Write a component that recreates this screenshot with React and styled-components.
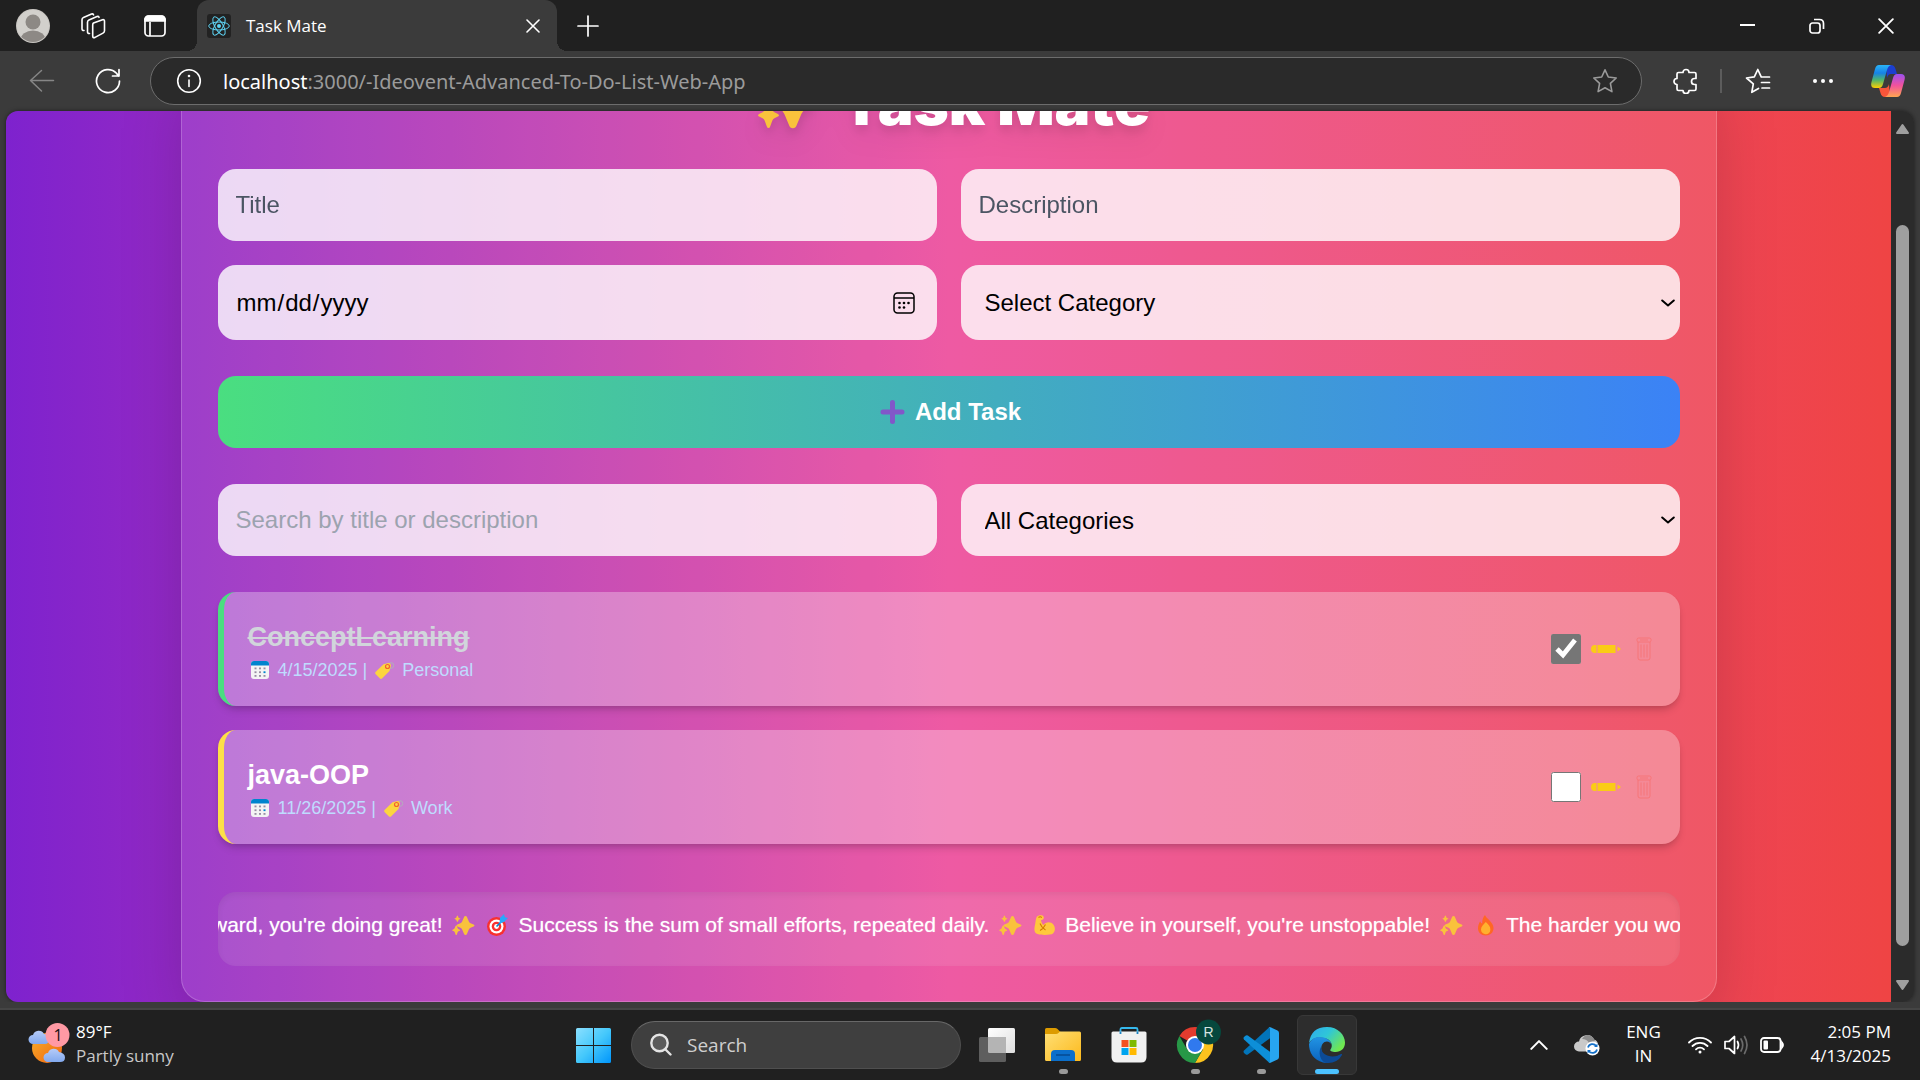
import React, { useState } from "react";
import styled, { createGlobalStyle } from "styled-components";

const ui = '"Open Sans", "Noto Sans", sans-serif';
const sans = '"Liberation Sans", Arial, sans-serif';

const GlobalStyle = createGlobalStyle`
  *, *::before, *::after { box-sizing: border-box; }
  body { margin: 0; background: #3b3b3b; font-family: ${ui}; color: #fff; }
  button, input, select { font: inherit; color: inherit; margin: 0; }
  button { border: 0; padding: 0; background: none; cursor: pointer; }
  h1, h2, p, ul { margin: 0; padding: 0; }
  ul { list-style: none; }
  svg { display: block; flex: none; }
`;

/* ---------- window frame ---------- */

const Desktop = styled.div`
  height: 100vh;
  display: grid;
  grid-template-rows: 51px 60px minmax(0, 1fr) 78px;
  grid-template-columns: minmax(0, 1fr);
  background: #3b3b3b;
`;

const TitleBar = styled.header`
  display: flex;
  align-items: center;
  background: #202020;
`;

const IconButton = styled.button`
  display: flex;
  align-items: center;
  justify-content: center;
  width: ${(p) => p.$w || 62}px;
  height: 48px;
  flex: none;
  color: ${(p) => (p.$dim ? "#868686" : "#fff")};
`;

const TitleTools = styled.div`
  display: flex;
  align-items: center;
  width: 197px;
  padding-left: 2px;
`;

const Tab = styled.div`
  position: relative;
  display: flex;
  align-items: center;
  align-self: stretch;
  width: 360px;
  padding: 0 2px 0 10px;
  background: #3b3b3b;
  border-radius: 12px 12px 0 0;
  font-size: 17px;

  &::before, &::after {
    content: "";
    position: absolute;
    bottom: 0;
    width: 10px;
    height: 10px;
  }
  &::before { left: -10px; background: radial-gradient(circle at 0 0, transparent 10px, #3b3b3b 10px); }
  &::after { right: -10px; background: radial-gradient(circle at 100% 0, transparent 10px, #3b3b3b 10px); }
`;

const TabTitle = styled.span`
  flex: 1;
  margin-left: 15px;
`;

const WindowControls = styled.div`
  display: flex;
  margin-left: auto;
`;

const Toolbar = styled.nav`
  display: flex;
  align-items: center;
  padding: 0 0 0 9px;
`;

const AddressBar = styled.div`
  display: flex;
  align-items: center;
  flex: 1;
  height: 48px;
  margin: 0 16px 0 9px;
  padding: 0 6px 0 8px;
  background: #2a2a2a;
  border: 1px solid #6c6c6c;
  border-radius: 24px;
`;

const Address = styled.div`
  flex: 1;
  padding-left: 4px;
  font-family: "Noto Sans", sans-serif;
  font-size: 20px;
  color: #9b9b9b;
  b { font-weight: 400; color: #fff; }
`;

const Divider = styled.span`
  width: 2px;
  height: 24px;
  margin: 0 4px 0 6px;
  background: #5c5c5c;
`;

const Stage = styled.div`
  display: flex;
  min-height: 0;
  margin: 0 6px;
  border-radius: 12px;
  overflow: hidden;
  box-shadow: 0 0 4px rgba(0, 0, 0, 0.5);
`;

const ScrollBar = styled.div`
  display: flex;
  flex-direction: column;
  align-items: center;
  width: 23px;
  padding: 12px 0 11px;
  background: #2b2b2b;
  color: #9f9f9f;
`;

const ScrollTrack = styled.div`
  flex: 1;
  width: 13px;
  padding: 90px 0 33px;
  display: flex;
`;

const ScrollThumb = styled.div`
  flex: 1;
  border-radius: 7px;
  background: #9f9f9f;
`;

/* ---------- page ---------- */

const Page = styled.main`
  flex: 1;
  min-width: 0;
  display: flex;
  flex-direction: column;
  justify-content: flex-end;
  align-items: center;
  overflow: hidden;
  font-family: ${sans};
  background: linear-gradient(to right, #7e22ce, #ec4899, #ef4444);
`;

const Card = styled.section`
  width: 100%;
  max-width: 1536px;
  padding: 36px 36px 35px;
  background: rgba(255, 255, 255, 0.1);
  border: 1px solid rgba(255, 255, 255, 0.2);
  border-radius: 24px;
  box-shadow: 0 38px 75px -18px rgba(0, 0, 0, 0.25);
`;

const Heading = styled.h1`
  display: flex;
  justify-content: center;
  align-items: center;
  gap: 18px;
  height: 60px;
  margin-bottom: 36px;
  font-family: Inter, ${sans};
  font-size: 60px;
  line-height: 60px;
  font-weight: 900;
  filter: drop-shadow(0 15px 12px rgba(0, 0, 0, 0.05)) drop-shadow(0 6px 5px rgba(0, 0, 0, 0.1));
`;

const FieldGrid = styled.div`
  display: grid;
  grid-template-columns: repeat(2, minmax(0, 1fr));
  gap: 24px;
  margin-bottom: 36px;
`;

const Field = styled.label`
  position: relative;
  display: flex;
  height: ${(p) => (p.$tall ? 75 : 72)}px;
`;

const control = `
  width: 100%;
  height: 100%;
  border: 0;
  border-radius: 18px;
  outline: 0;
  background: rgba(255, 255, 255, 0.8);
  color: #000;
  font-family: ${sans};
  font-size: 24px;
`;

const TextInput = styled.input`
  ${control}
  padding: 0 18px;
  &::placeholder { color: ${(p) => (p.$soft ? "#9ca3af" : "#4b5563")}; opacity: 1; }
  &::-webkit-calendar-picker-indicator { opacity: 0; }
`;

const Select = styled.select`
  ${control}
  appearance: none;
  padding: 0 24px;
`;

const FieldIcon = styled.span`
  position: absolute;
  top: 0;
  bottom: 0;
  right: ${(p) => p.$right}px;
  display: flex;
  align-items: center;
  color: #000;
  pointer-events: none;
`;

const AddButton = styled.button`
  display: flex;
  align-items: center;
  justify-content: center;
  gap: 6px;
  width: 100%;
  height: 72px;
  margin-bottom: 36px;
  border-radius: 18px;
  background: linear-gradient(to right, #4ade80, #3b82f6);
  font-size: 24px;
  font-weight: 700;
`;

const TaskList = styled.ul`
  display: flex;
  flex-direction: column;
  gap: 24px;
`;

const TaskItem = styled.li`
  display: flex;
  align-items: center;
  justify-content: space-between;
  padding: 24px;
  border-left: 6px solid ${(p) => (p.$done ? "#4ade80" : "#fde047")};
  border-radius: 18px;
  background: rgba(255, 255, 255, 0.3);
  box-shadow: 0 6px 9px -2px rgba(0, 0, 0, 0.15), 0 3px 6px -3px rgba(0, 0, 0, 0.15);
`;

const TaskTitle = styled.h2`
  font-size: 27px;
  line-height: 42px;
  color: ${(p) => (p.$done ? "#d1d5db" : "#fff")};
  text-decoration: ${(p) => (p.$done ? "line-through" : "none")};
`;

const TaskMeta = styled.p`
  display: flex;
  align-items: center;
  gap: 5px;
  font-size: 18px;
  line-height: 24px;
  color: #bfdbfe;
`;

const Actions = styled.div`
  display: flex;
  align-items: center;
  gap: 10px;
`;

const Check = styled.input`
  width: 30px;
  height: 30px;
  accent-color: #767676;
`;

const ActionButton = styled.button`
  display: flex;
  justify-content: center;
  align-items: center;
  width: ${(p) => p.$w}px;
  height: 36px;
  color: ${(p) => p.$color};
`;

const Ticker = styled.div`
  height: 74px;
  margin-top: 48px;
  padding: 18px 0 0;
  border-radius: 18px;
  overflow: hidden;
  background: rgba(255, 255, 255, 0.1);
  box-shadow: inset 0 3px 6px rgba(0, 0, 0, 0.06);
`;

const TickerTrack = styled.div`
  display: flex;
  align-items: center;
  gap: 6px;
  width: max-content;
  font-size: 21px;
  line-height: 30px;
  white-space: nowrap;
  text-shadow: 0 0 1px rgba(255, 255, 255, 0.6);
  transform: translateX(-30px);
`;

/* ---------- task bar ---------- */

const BottomEdge = styled.footer`
  display: grid;
  grid-template-rows: 6px 2px 70px;
  background: #3b3b3b;
`;

const EdgeLine = styled.span`
  grid-row: 2;
  background: #454545;
`;

const TaskBar = styled.div`
  grid-row: 3;
  display: grid;
  grid-template-columns: minmax(0, 1fr) auto minmax(0, 1fr);
  align-items: center;
  background: #202020;
`;

const Weather = styled.button`
  display: flex;
  align-items: center;
  gap: 6px;
  justify-self: start;
  padding-left: 28px;
  text-align: left;
`;

const TwoLines = styled.span`
  display: flex;
  flex-direction: column;
  padding-bottom: 2px;
  font-size: 17px;
  line-height: 24px;
  color: #fff;
  text-align: ${(p) => p.$align || "left"};
  small { font-size: 17px; color: #c8c8c8; }
`;

const Apps = styled.div`
  display: flex;
  align-items: center;
  gap: 6px;
`;

const AppTile = styled.button`
  position: relative;
  display: flex;
  align-items: center;
  justify-content: center;
  width: 60px;
  height: 60px;
  border-radius: 6px;
  border: 1px solid ${(p) => (p.$active ? "#383838" : "transparent")};
  background: ${(p) => (p.$active ? "#2d2d2d" : "transparent")};

  &::after {
    content: "";
    display: ${(p) => (p.$running || p.$active ? "block" : "none")};
    position: absolute;
    bottom: 0;
    width: ${(p) => (p.$active ? 24 : 9)}px;
    height: 5px;
    border-radius: 3px;
    background: ${(p) => (p.$active ? "#4cc2ff" : "#9a9a9a")};
  }
`;

const SearchBox = styled.label`
  display: flex;
  align-items: center;
  gap: 15px;
  width: 330px;
  height: 48px;
  padding: 0 18px;
  margin-left: 2px;
  border-radius: 24px;
  border: 1px solid #4f4f4f;
  border-top-color: #686868;
  background: #3f3f3f;
`;

const SearchInput = styled.input`
  flex: 1;
  min-width: 0;
  border: 0;
  outline: 0;
  padding: 0;
  background: none;
  font-size: 19px;
  &::placeholder { color: #cfcfcf; opacity: 1; }
`;

const Tray = styled.div`
  display: flex;
  align-items: center;
  justify-self: end;
  padding-right: 29px;
`;

const Quick = styled.button`
  display: flex;
  align-items: center;
  gap: 12px;
  margin: 0 26px 0 13px;
`;

/* ---------- drawings ---------- */

const Star4 = ({ x, y, r, ry = r }) => (
  <path
    d={`M${x} ${y - ry}q${r * 0.12} 0 ${r * 0.16} ${ry * 0.12}l${r * 0.2} ${ry * 0.44}q${r * 0.06} ${ry * 0.14} ${r * 0.2} ${ry * 0.2}l${r * 0.34} ${ry * 0.14}q${r * 0.1} ${ry * 0.05} ${r * 0.1} ${ry * 0.1}t${-r * 0.1} ${ry * 0.1}l${-r * 0.34} ${ry * 0.14}q${-r * 0.14} ${ry * 0.06} ${-r * 0.2} ${ry * 0.2}l${-r * 0.2} ${ry * 0.44}q${-r * 0.04} ${ry * 0.12} ${-r * 0.16} ${ry * 0.12}t${-r * 0.16} ${-ry * 0.12}l${-r * 0.2} ${-ry * 0.44}q${-r * 0.06} ${-ry * 0.14} ${-r * 0.2} ${-ry * 0.2}l${-r * 0.34} ${-ry * 0.14}q${-r * 0.1} ${-ry * 0.05} ${-r * 0.1} ${-ry * 0.1}t${r * 0.1} ${-ry * 0.1}l${r * 0.34} ${-ry * 0.14}q${r * 0.14} ${-ry * 0.06} ${r * 0.2} ${-ry * 0.2}l${r * 0.2} ${-ry * 0.44}q${r * 0.04} ${-ry * 0.12} ${r * 0.16} ${-ry * 0.12}z`}
  />
);

const Sparkles = ({ size = 29 }) => (
  <svg width={size} height={size} viewBox="0 0 29 29" fill="#f9c23c">
    <Star4 x={17.5} y={14.5} r={9} ry={9.6} />
    <Star4 x={8.2} y={19.2} r={4} ry={4.8} />
    <Star4 x={9.4} y={7.8} r={3} ry={3.2} />
  </svg>
);

const Target = () => (
  <svg width="29" height="29" viewBox="0 0 29 29">
    <circle cx="13.5" cy="15.5" r="9.5" fill="#f8312f" />
    <circle cx="13.5" cy="15.5" r="7" fill="#fff" />
    <circle cx="13.5" cy="15.5" r="4.8" fill="#f8312f" />
    <circle cx="13.5" cy="15.5" r="2.4" fill="#fff" />
    <path d="M13.5 15.5L20 9" stroke="#0084ce" strokeWidth="1.6" />
    <path d="M16.500 12.500l.5-5.500 4-4 .8 3.200 3.200.8-4 4z" fill="#26a9fc" />
  </svg>
);

const Muscle = () => (
  <svg width="29" height="29" viewBox="0 0 29 29">
    <path d="M7 5.500c2-1.500 5.500-2 6.500 0s-.5 3.500-2.500 3.500c.6 2.500.8 3.500 2.500 5 2-2.800 5-3.600 7.800-2.200 4 2 4.800 8.200 1.700 10.700-2.500 1.800-12 2-16.200.3-3.400-1.600-2.300-6.800-1.600-9.800.5-3 .5-5.500 1.800-7.500z" fill="#ffc83d" />
    <path d="M8.500 6.500q2-1.600 3.200.2M10 12.500c1 3 2.500 4.500 5.500 6.500M15.500 13.500c-1.500 3-3.500 5-5.500 6" stroke="#d67d00" strokeWidth="1.1" fill="none" />
  </svg>
);

const Flame = () => (
  <svg width="29" height="29" viewBox="0 0 29 29">
    <path d="M14 4c1 3.500 8.500 7 8.500 13 0 4.600-3.400 7.500-7.800 7.500S7 21.600 7 17.300c0-3 1-5 2.200-7 .5 1.400 1 2 2 2.300C11 9.500 12 6 14 4z" fill="#ff6723" />
    <path d="M14.800 11c3 2.800 4.600 4.700 4.600 7.400 0 3-2 4.800-4.700 4.800s-4.700-1.800-4.700-4.600c0-3 2.200-4.400 4.800-7.600z" fill="#ffb02e" />
  </svg>
);

const CalendarEmoji = () => (
  <svg width="25" height="24" viewBox="0 0 25 24">
    <rect x="3" y="3" width="18" height="18" rx="3" fill="#f4f4f4" />
    <path d="M3 7.500V6a3 3 0 0 1 3-3h12a3 3 0 0 1 3 3v1.500z" fill="#0084ce" />
    <g fill="#998ea4">
      {[6.5, 11, 15.5].map((x) => [9.5, 13.3, 17].map((y) => <rect key={x + "-" + y} x={x} y={y} width="2" height="1.800" fill={x === 15.5 && y === 13.3 ? "#0084ce" : "#998ea4"} />))}
    </g>
  </svg>
);

const TagEmoji = () => (
  <svg width="25" height="24" viewBox="0 0 25 24">
    <circle cx="19" cy="7.500" r="2.800" fill="none" stroke="#b4acbc" strokeWidth="1" />
    <path d="M11.500 6.200L16.500 5q2.200 0 2.500 2.400L17.500 13l-7.500 7.500q-1 .8-2 0L3.500 16q-.8-1 0-2z" fill="#fcd53f" />
    <circle cx="15.500" cy="8.500" r="2" fill="none" stroke="#f3622f" strokeWidth="1.200" />
  </svg>
);

const PlusEmoji = () => (
  <svg width="33" height="28" viewBox="0 0 33 28" stroke="#8257c9" strokeWidth="5" strokeLinecap="round">
    <path d="M16.500 4.500v19M7 14h19" />
  </svg>
);

const DateIcon = () => (
  <svg width="22" height="22" viewBox="0 0 22 22" fill="none" stroke="currentColor" strokeWidth="1.500">
    <rect x="1" y="1" width="20" height="20" rx="3.500" />
    <path d="M1 6h20" />
    <g fill="currentColor" stroke="none">
      <circle cx="6.500" cy="11" r="1.300" /><circle cx="11" cy="11" r="1.300" /><circle cx="15.500" cy="11" r="1.300" />
      <circle cx="6.500" cy="15.500" r="1.300" /><circle cx="11" cy="15.500" r="1.300" />
    </g>
  </svg>
);

const Chevron = ({ up, size = 14, w = 2 }) => (
  <svg width={size} height={size} viewBox="0 0 14 14" fill="none" stroke="currentColor" strokeWidth={w} strokeLinecap="round" strokeLinejoin="round">
    <path d={up ? "M1 10L7 4l6 6" : "M1.200 4.500L7 9.500l5.800-5"} />
  </svg>
);

const Pencil = () => (
  <svg width="30" height="8" viewBox="0 0 30 8" fill="currentColor">
    <path d="M4 0h1.500v8H4a4 4 0 0 1 0-8zM6.500 0h18v8h-18zM26.500 1.500L30 4l-3.500 2.500z" />
  </svg>
);

const Trash = () => (
  <svg width="16" height="24" viewBox="0 0 16 24" fill="none" stroke="currentColor" strokeWidth=".8">
    <rect x="1" y="1" width="14" height="4" rx="1.500" />
    <path d="M2 5v16q0 2 2 2h8q2 0 2-2V5M5 7.500v13M8 7.500v13M11 7.500v13M4 3h8" />
  </svg>
);

const Avatar = () => (
  <svg width="34" height="34" viewBox="0 0 34 34">
    <clipPath id="avatar"><circle cx="17" cy="17" r="16" /></clipPath>
    <circle cx="17" cy="17" r="17" fill="#c9c6c2" />
    <g clipPath="url(#avatar)">
      <rect width="34" height="34" fill="#d2d0cc" />
      <circle cx="17" cy="13" r="7.500" fill="#8d8985" />
      <ellipse cx="17" cy="31" rx="12.500" ry="9.500" fill="#8d8985" />
    </g>
  </svg>
);

const Workspaces = () => (
  <svg width="26" height="26" viewBox="0 0 26 26" fill="none" stroke="currentColor" strokeWidth="1.600" strokeLinejoin="round" strokeLinecap="round">
    <path d="M13.500 10l9-3.300q2-.5 2 1.500v9.500q0 1.600-1.500 2.400l-8 4.300q-2.300.9-2.300-1.500V12q0-1.400.8-2z" />
    <path d="M9.500 20.500q-2 .2-2-1.800V9.200q0-1.600 1.500-2.300L17 3.500q1.500-.4 2 .8" />
    <path d="M4 17.500q-2 .2-2-1.800V6.700q0-1.600 1.500-2.300L11.500 1q1.500-.4 2 .8" />
  </svg>
);

const TabActions = () => (
  <svg width="24" height="24" viewBox="0 0 24 24" fill="none" stroke="currentColor" strokeWidth="1.700">
    <rect x="2" y="2" width="20" height="20" rx="3.500" />
    <path d="M2 5.500A3.500 3.500 0 0 1 5.500 2h13A3.500 3.500 0 0 1 22 5.500V7H2z" fill="currentColor" />
    <path d="M7 8v14" />
  </svg>
);

const ReactLogo = () => (
  <svg width="24" height="24" viewBox="0 0 24 24">
    <rect width="24" height="24" rx="3" fill="#222" />
    <g fill="none" stroke="#5ed3f3" strokeWidth="1">
      {[0, 60, 120].map((a) => <ellipse key={a} cx="12" cy="12" rx="10.300" ry="4" transform={`rotate(${a} 12 12)`} />)}
    </g>
    <circle cx="12" cy="12" r="2" fill="#5ed3f3" />
  </svg>
);

const Cross = ({ size = 14 }) => (
  <svg width={size} height={size} viewBox="0 0 14 14" stroke="currentColor" strokeWidth="1.600" strokeLinecap="round">
    <path d="M1 1l12 12M13 1L1 13" />
  </svg>
);

const Plus = () => (
  <svg width="22" height="22" viewBox="0 0 22 22" stroke="currentColor" strokeWidth="1.700" strokeLinecap="round"><path d="M11 1v20M1 11h20" /></svg>
);

const Minimize = () => (
  <svg width="16" height="16" viewBox="0 0 16 16" fill="currentColor"><rect y="6" width="15" height="2" /></svg>
);

const Restore = () => (
  <svg width="16" height="16" viewBox="0 0 16 16" fill="none" stroke="currentColor" strokeWidth="1.700">
    <rect x="1" y="5" width="10" height="10" rx="2.500" />
    <path d="M5 1.500h5.500q4 0 4 4V11" />
  </svg>
);

const Back = () => (
  <svg width="26" height="26" viewBox="0 0 26 26" fill="none" stroke="currentColor" strokeWidth="1.500" strokeLinecap="round" strokeLinejoin="round">
    <path d="M24.500 12.500H1.500M12.500 2.500L1.500 12.500l11 10.500" />
  </svg>
);

const Reload = () => (
  <svg width="26" height="26" viewBox="0 0 26 26" fill="none" stroke="currentColor" strokeWidth="1.700" strokeLinecap="round" strokeLinejoin="round">
    <path d="M24.500 13A11.500 11.500 0 1 1 21.500 5.300L23.500 8M24 1.500V8h-6.500" />
  </svg>
);

const Info = () => (
  <svg width="26" height="26" viewBox="0 0 26 26" fill="none" stroke="currentColor" strokeWidth="1.600" strokeLinecap="round">
    <circle cx="13" cy="13" r="11.300" /><path d="M13 12v6.500" /><circle cx="13" cy="8" r=".5" fill="currentColor" />
  </svg>
);

const StarIcon = () => (
  <svg width="26" height="26" viewBox="0 0 26 26" fill="none" stroke="#9a9a9a" strokeWidth="1.600" strokeLinejoin="round">
    <path d="M13 1.800l3.300 7.200 7.900 1-5.800 5.400 1.500 8.200-6.900-3.900-6.900 3.900 1.500-8.200L1.800 10l7.900-1z" />
  </svg>
);

const Puzzle = () => (
  <svg width="26" height="26" viewBox="0 0 26 26" fill="none" stroke="currentColor" strokeWidth="1.700" strokeLinejoin="round">
    <path d="M5.500 4.500H10a3 3 0 0 1 6 0h5.500q1.500 0 1.500 1.500v4.500h-1.500a3 3 0 0 0 0 6H23V21q0 1.500-1.500 1.500H16a3 3 0 0 1-6 0H5.500Q4 22.500 4 21v-4.500a3 3 0 0 1 0-6V6q0-1.500 1.500-1.500z" />
  </svg>
);

const Favorites = () => (
  <svg width="26" height="26" viewBox="0 0 26 26" fill="none" stroke="currentColor" strokeWidth="1.700" strokeLinejoin="round" strokeLinecap="round">
    <path d="M17 9h7.500M16.500 14.500h8M17 20h7.500" />
    <path d="M13.500 20.500l-6.700 3.800 1.500-8.400L1.500 10l7.800-1.200L12.800 1.500l3.400 7.300" />
  </svg>
);

const Dots = () => (
  <svg width="22" height="6" viewBox="0 0 22 6" fill="currentColor"><circle cx="3" cy="3" r="2" /><circle cx="11" cy="3" r="2" /><circle cx="19" cy="3" r="2" /></svg>
);

const Copilot = () => (
  <svg width="34" height="32" viewBox="0 0 34 32">
    <defs>
      <linearGradient id="cpA" x1="0" y1="0" x2="0" y2="1"><stop offset="0" stopColor="#2ab4f8" /><stop offset=".35" stopColor="#1682e6" /><stop offset=".65" stopColor="#4fb56c" /><stop offset="1" stopColor="#ffd000" /></linearGradient>
      <linearGradient id="cpB" x1="0" y1="0" x2="0" y2="1"><stop offset="0" stopColor="#9b50f0" /><stop offset=".5" stopColor="#f2529c" /><stop offset="1" stopColor="#ffa650" /></linearGradient>
    </defs>
    <path d="M15 0h5q3.500 0 4.500 4l1.500 5h-6q-3 0-4 4z" fill="#1c3fd0" />
    <path d="M19 32h-5q-3.500 0-4.500-4L8 23h6q3 0 4-4z" fill="#f8553a" />
    <path d="M8 0h12q-3 1-4 5l-4 14q-1 4-4 4H4q-5 0-3.500-6L4 4q1-4 4-4z" fill="url(#cpA)" />
    <path d="M26 32H14q3-1 4-5l4-14q1-4 4-4h4q5 0 3.500 6L30 28q-1 4-4 4z" fill="url(#cpB)" />
  </svg>
);

const Arrow = ({ down }) => (
  <svg width="15" height="12" viewBox="0 0 15 12" fill="currentColor" stroke="currentColor" strokeWidth="2" strokeLinejoin="round">
    <path d={down ? "M2 2h11L7.500 10z" : "M2 10h11L7.500 2z"} />
  </svg>
);

const WeatherIcon = () => (
  <svg width="42" height="44" viewBox="0 0 42 44">
    <defs>
      <linearGradient id="sun" x1="0" y1="0" x2="1" y2="1"><stop offset="0" stopColor="#f6b02c" /><stop offset="1" stopColor="#f2640f" /></linearGradient>
      <linearGradient id="cloud" x1="0" y1="0" x2="0" y2="1"><stop offset="0" stopColor="#b5cbf8" /><stop offset="1" stopColor="#82a9ee" /></linearGradient>
    </defs>
    <circle cx="19" cy="25" r="15" fill="url(#sun)" />
    <path d="M5 21a4.500 4.500 0 0 1 0-9 6 6 0 0 1 11-1q5 0 5 5t-4 5z" fill="url(#cloud)" />
    <path d="M20 39a4.500 4.500 0 0 1 0-9 6 6 0 0 1 11-1q6 1 6 5.500T32 39z" fill="url(#cloud)" />
    <circle cx="29.500" cy="12" r="12" fill="#ff99a4" />
    <text x="30" y="18" fontSize="16" textAnchor="middle" fill="#111" fontFamily="Open Sans">1</text>
  </svg>
);

const WindowsLogo = () => (
  <svg width="35" height="35" viewBox="0 0 35 35">
    <defs><linearGradient id="win" x1="0" y1="0" x2="35" y2="35" gradientUnits="userSpaceOnUse"><stop offset="0" stopColor="#8be0ff" /><stop offset=".5" stopColor="#45c8fb" /><stop offset="1" stopColor="#0095fb" /></linearGradient></defs>
    <g fill="url(#win)"><path d="M1.500 0H17v17H0V1.500Q0 0 1.500 0zM18 0h15.500Q35 0 35 1.500V17H18zM0 18h17v17H1.500Q0 35 0 33.500zM18 18h17v15.500q0 1.500-1.500 1.500H18z" /></g>
  </svg>
);

const Magnifier = () => (
  <svg width="22" height="24" viewBox="0 0 22 24" fill="#5b5b5b" stroke="#e4e4e4" strokeWidth="2.400" strokeLinecap="round">
    <circle cx="9.500" cy="10" r="8.200" /><path d="M15.500 16.500l5 5" />
  </svg>
);

const TaskView = () => (
  <svg width="36" height="34" viewBox="0 0 36 34">
    <defs><linearGradient id="tv" x1="0" y1="0" x2="1" y2="1"><stop offset="0" stopColor="#fff" /><stop offset="1" stopColor="#dedede" /></linearGradient></defs>
    <rect x="9" width="27" height="25" rx="1.500" fill="url(#tv)" />
    <rect y="9" width="27" height="25" rx="1.500" fill="#5e5e5e" />
    <path d="M9 9h18v16H10.500Q9 25 9 23.500z" fill="#b4b4b4" />
  </svg>
);

const Folder = () => (
  <svg width="36" height="34" viewBox="0 0 36 34">
    <defs><linearGradient id="fold" x1="0" y1="0" x2="1" y2="1"><stop offset="0" stopColor="#ffdf75" /><stop offset="1" stopColor="#fcb91c" /></linearGradient></defs>
    <path d="M0 1.500Q0 0 1.500 0H10q1.500 0 2.500 1l3 3v6H0z" fill="#dd9b00" />
    <path d="M0 6h11q1.500 0 2.500-1l1.500-1.500h19.500Q36 3.500 36 5v26.500q0 1.500-1.500 1.500h-33Q0 33 0 31.500z" fill="url(#fold)" />
    <path d="M6 33v-7q0-4 4-4h16q4 0 4 4v7z" fill="#0b6fcb" />
    <path d="M11 27h14" stroke="#064a92" strokeWidth="1.500" />
  </svg>
);

const Store = () => (
  <svg width="36" height="36" viewBox="0 0 36 36">
    <path d="M9.500 8V2.500q0-1.500 1.500-1.500h14q1.500 0 1.500 1.500V8" fill="none" stroke="#35b8ec" strokeWidth="1.800" />
    <path d="M.5 6Q.5 4.500 2 4.500h32q1.500 0 1.500 1.500v24q0 5.500-5.500 5.500H6Q.5 35.500.5 30z" fill="#f1f1f1" />
    <path d="M9.500 7V4.500M26.500 7V4.500" stroke="#1a83c4" strokeWidth="1.800" />
    <path d="M10.500 13h7v7h-7z" fill="#f25022" /><path d="M18.500 13h7v7h-7z" fill="#7fba00" />
    <path d="M10.500 21h7v7h-7z" fill="#00a4ef" /><path d="M18.500 21h7v7h-7z" fill="#ffb900" />
  </svg>
);

const Chrome = () => (
  <svg width="52" height="52" viewBox="0 0 52 52">
    <path d="M26 26L10.400 17A18 18 0 0 1 41.600 17H26z" fill="#e33b2e" />
    <path d="M26 17h15.600A18 18 0 0 1 26 44l7.800-13.500z" fill="#fcc31e" />
    <path d="M26 44A18 18 0 0 1 10.400 17l7.800 13.500L33.800 30.500z" fill="#279847" />
    <circle cx="26" cy="26" r="9" fill="#fff" /><circle cx="26" cy="26" r="7" fill="#3079ee" />
    <circle cx="39.500" cy="13" r="12.500" fill="#06483d" />
    <text x="39.500" y="18" fontSize="14" textAnchor="middle" fill="#d5e4e0" fontFamily="Liberation Sans">R</text>
  </svg>
);

const VSCode = () => (
  <svg width="36" height="36" viewBox="0 0 36 36">
    <path d="M26 0.500L1 23.500q-1 1.200 0 2.400l1.800 1.600q1 .7 2 0L34 6z" fill="#0274b9" />
    <path d="M26 35.500L1 12.500q-1-1.200 0-2.400l1.800-1.600q1-.7 2 0L34 30z" fill="#0d8fd8" />
    <path d="M25.500.5q1-.7 2-.2l7 3.300q1.500.8 1.500 2.400v24q0 1.600-1.500 2.400l-7 3.300q-1.200.5-2-.3 1.500.5 1.500-1.600V2q0-2-1.500-1.500z" fill="#27a5f0" />
  </svg>
);

const Edge = () => (
  <svg width="36" height="36" viewBox="0 0 36 36">
    <defs>
      <linearGradient id="eA" x1="0" y1="0" x2="1" y2=".6"><stop offset="0" stopColor="#2fa9ee" /><stop offset=".5" stopColor="#2fc6d8" /><stop offset="1" stopColor="#70e850" /></linearGradient>
      <linearGradient id="eB" x1="0" y1="0" x2="0" y2="1"><stop offset="0" stopColor="#2294e4" /><stop offset="1" stopColor="#0a62bd" /></linearGradient>
    </defs>
    <path d="M0 16Q2 0 18 0c11 0 18 8 18 15.500 0 6-4 9.500-9.500 9.500-3.500 0-6-1-5-2.500 3-4 1-10-6.500-11.500Q5 9 0 16z" fill="url(#eA)" />
    <path d="M0 17q3-7 10-7c7 0 12 3.500 12.500 8-.7-3-4-4.500-7-3-5 3-4 12 1 16.500q2.500 2.500 6 3Q18 36.500 14 35.500 0 31 0 17z" fill="url(#eB)" />
    <path d="M12 20c0 6 5.500 9.500 11.500 9.500 4 0 6.500-1.500 8.500-2.500q1.500-.5 1 1Q28.500 36 19 36C11 36 9 25 12 20z" fill="#0c4a96" />
  </svg>
);

const Cloud = () => (
  <svg width="26" height="22" viewBox="0 0 26 22">
    <path d="M5 17.500a5 5 0 0 1 0-10 8 8 0 0 1 15-2q4 1 4 5.500t-4 6.500z" fill="#c9c9c9" />
    <path d="M8 5q4-6 9-3 3 1.500 4 5l-6 2q-2-4-7-4z" fill="#8d8d8d" />
    <circle cx="18.500" cy="14.500" r="7" fill="#fff" />
    <path d="M14 13.500a4.600 4.600 0 0 1 8.200-1.500M23 15.500a4.600 4.600 0 0 1-8.200 1.500" fill="none" stroke="#1470c8" strokeWidth="1.700" />
    <path d="M23.500 9.500v3.500H20zM13.500 19.500V16H17z" fill="#1470c8" />
  </svg>
);

const Wifi = () => (
  <svg width="24" height="20" viewBox="0 0 24 20" fill="none" stroke="#fff" strokeWidth="1.800" strokeLinecap="round">
    <path d="M1 7.500a15.500 15.500 0 0 1 22 0M4.500 11a10.500 10.500 0 0 1 15 0M8 14.300a5.800 5.800 0 0 1 8 0" /><circle cx="12" cy="17" r="1.500" fill="#fff" stroke="none" />
  </svg>
);

const Volume = () => (
  <svg width="24" height="20" viewBox="0 0 24 20" fill="none" stroke="#fff" strokeWidth="1.700" strokeLinecap="round" strokeLinejoin="round">
    <path d="M1 6.500h4L10.500 1.500v17L5 13.500H1z" /><path d="M13.500 6.500q2 3.500 0 7" /><g stroke="#6b6b6b"><path d="M17 4q3.500 6 0 12M20.500 1.500q5 8.500 0 17" /></g>
  </svg>
);

const Battery = () => (
  <svg width="24" height="16" viewBox="0 0 24 16" fill="none" stroke="#fff" strokeWidth="1.800">
    <rect x="1" y="1" width="19.500" height="14" rx="3" /><rect x="3.500" y="3.500" width="4.500" height="9" rx="1" fill="#fff" stroke="none" /><path d="M22 5.500q2 2.500 0 5z" fill="#fff" />
  </svg>
);

/* ---------- app ---------- */

const initialTasks = [
  { id: 1, title: "ConceptLearning", date: "4/15/2025", category: "Personal", done: true },
  { id: 2, title: "java-OOP", date: "11/26/2025", category: "Work", done: false },
];

function SelectField({ label, options, tall }) {
  return (
    <Field $tall={tall}>
      <Select aria-label={label}>
        {options.map((o) => <option key={o}>{o}</option>)}
      </Select>
      <FieldIcon $right={5}><Chevron /></FieldIcon>
    </Field>
  );
}

function TaskMate() {
  const [tasks, setTasks] = useState(initialTasks);
  const toggle = (id) => setTasks(tasks.map((t) => (t.id === id ? { ...t, done: !t.done } : t)));
  return (
    <Card>
      <Heading><Sparkles size={76} /><span>Task Mate</span></Heading>
      <FieldGrid>
        <Field><TextInput aria-label="Title" placeholder="Title" /></Field>
        <Field><TextInput aria-label="Description" placeholder="Description" /></Field>
        <Field $tall>
          <TextInput type="date" aria-label="Due date" />
          <FieldIcon $right={22}><DateIcon /></FieldIcon>
        </Field>
        <SelectField tall label="Category" options={["Select Category", "Work", "Personal"]} />
      </FieldGrid>
      <AddButton type="button"><PlusEmoji />Add Task</AddButton>
      <FieldGrid>
        <Field><TextInput $soft aria-label="Search tasks" placeholder="Search by title or description" /></Field>
        <SelectField label="Filter by category" options={["All Categories", "Work", "Personal"]} />
      </FieldGrid>
      <TaskList>
        {tasks.map((t) => (
          <TaskItem key={t.id} $done={t.done}>
            <div>
              <TaskTitle $done={t.done}>{t.title}</TaskTitle>
              <TaskMeta><CalendarEmoji /><span>{t.date} |</span><TagEmoji /><span>{t.category}</span></TaskMeta>
            </div>
            <Actions>
              <Check type="checkbox" aria-label={`${t.title} done`} checked={t.done} onChange={() => toggle(t.id)} />
              <ActionButton $w={31} $color="#facc15" aria-label="Edit"><Pencil /></ActionButton>
              <ActionButton $w={24} $color="#f87171" aria-label="Delete"><Trash /></ActionButton>
            </Actions>
          </TaskItem>
        ))}
      </TaskList>
      <Ticker>
        <TickerTrack>
          <span>forward, you're doing great!</span><Sparkles />
          <Target /><span>Success is the sum of small efforts, repeated daily.</span><Sparkles />
          <Muscle /><span>Believe in yourself, you're unstoppable!</span><Sparkles />
          <Flame /><span>The harder you work</span>
        </TickerTrack>
      </Ticker>
    </Card>
  );
}

export default function App() {
  return (
    <Desktop>
      <GlobalStyle />
      <TitleBar>
        <TitleTools>
          <IconButton aria-label="Profile"><Avatar /></IconButton>
          <IconButton $w={58} aria-label="Workspaces"><Workspaces /></IconButton>
          <IconButton $w={66} aria-label="Tab actions"><TabActions /></IconButton>
        </TitleTools>
        <Tab>
          <ReactLogo />
          <TabTitle>Task Mate</TabTitle>
          <IconButton $w={44} aria-label="Close tab"><Cross /></IconButton>
        </Tab>
        <IconButton aria-label="New tab"><Plus /></IconButton>
        <WindowControls>
          <IconButton $w={69} aria-label="Minimize"><Minimize /></IconButton>
          <IconButton $w={69} aria-label="Restore"><Restore /></IconButton>
          <IconButton $w={69} aria-label="Close"><Cross size={16} /></IconButton>
        </WindowControls>
      </TitleBar>
      <Toolbar>
        <IconButton $w={66} $dim aria-label="Back"><Back /></IconButton>
        <IconButton $w={66} aria-label="Reload"><Reload /></IconButton>
        <AddressBar>
          <IconButton $w={60} aria-label="Site information"><Info /></IconButton>
          <Address><b>localhost</b>:3000/-Ideovent-Advanced-To-Do-List-Web-App</Address>
          <IconButton $w={60} aria-label="Add to favorites"><StarIcon /></IconButton>
        </AddressBar>
        <IconButton $w={56} aria-label="Extensions"><Puzzle /></IconButton>
        <Divider />
        <IconButton $w={64} aria-label="Favorites"><Favorites /></IconButton>
        <IconButton $w={66} aria-label="More"><Dots /></IconButton>
        <IconButton $w={64} aria-label="Copilot"><Copilot /></IconButton>
      </Toolbar>
      <Stage>
        <Page><TaskMate /></Page>
        <ScrollBar>
          <Arrow />
          <ScrollTrack><ScrollThumb /></ScrollTrack>
          <Arrow down />
        </ScrollBar>
      </Stage>
      <BottomEdge>
        <EdgeLine />
        <TaskBar>
          <Weather>
            <WeatherIcon />
            <TwoLines><span>89°F</span><small>Partly sunny</small></TwoLines>
          </Weather>
          <Apps>
            <AppTile aria-label="Start"><WindowsLogo /></AppTile>
            <SearchBox><Magnifier /><SearchInput aria-label="Search" placeholder="Search" /></SearchBox>
            <AppTile aria-label="Task view"><TaskView /></AppTile>
            <AppTile $running aria-label="File Explorer"><Folder /></AppTile>
            <AppTile aria-label="Store"><Store /></AppTile>
            <AppTile $running aria-label="Chrome"><Chrome /></AppTile>
            <AppTile $running aria-label="Visual Studio Code"><VSCode /></AppTile>
            <AppTile $active aria-label="Edge"><Edge /></AppTile>
          </Apps>
          <Tray>
            <IconButton $w={48} aria-label="Hidden icons"><Chevron up size={18} w={1.6} /></IconButton>
            <IconButton $w={48} aria-label="OneDrive"><Cloud /></IconButton>
            <IconButton $w={64} aria-label="Language"><TwoLines $align="center"><span>ENG</span><span>IN</span></TwoLines></IconButton>
            <Quick aria-label="Quick settings"><Wifi /><Volume /><Battery /></Quick>
            <TwoLines $align="right"><span>2:05 PM</span><span>4/13/2025</span></TwoLines>
          </Tray>
        </TaskBar>
      </BottomEdge>
    </Desktop>
  );
}
